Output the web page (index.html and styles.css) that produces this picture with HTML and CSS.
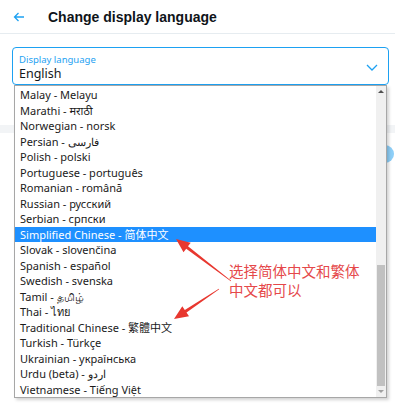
FILE: index.html
```html
<!DOCTYPE html>
<html lang="en">
<head>
  <meta charset="UTF-8" />
  <title>Change display language</title>
  <link rel="stylesheet" href="styles.css">
</head>
<body>
  <div class="column">
    <header>
      <svg class="back" width="12" height="10" viewBox="0 0 12 10">
        <path d="M11 5H1.5M5.5 1L1.5 5l4 4" fill="none" stroke="#1da1f2" stroke-width="1.3"/>
      </svg>
      <h1>Change display language</h1>
    </header>

    <div class="field">
      <div class="field-text">
        <span class="field-label">Display language</span>
        <span class="field-value">English</span>
      </div>
      <svg class="chevron" width="12" height="7" viewBox="0 0 12 7">
        <path d="M1 1l5 5 5-5" fill="none" stroke="#1da1f2" stroke-width="1.3"/>
      </svg>
    </div>

    <div class="band"></div>
    <div class="actions">
      <button class="save">Save</button>
    </div>
  </div>

  <div class="dropdown">
    <ul class="options">
      <li>Malay - Melayu</li>
      <li>Marathi - मराठी</li>
      <li>Norwegian - norsk</li>
      <li>Persian - فارسی</li>
      <li>Polish - polski</li>
      <li>Portuguese - português</li>
      <li>Romanian - română</li>
      <li>Russian - русский</li>
      <li>Serbian - српски</li>
      <li class="selected">Simplified Chinese - 简体中文</li>
      <li>Slovak - slovenčina</li>
      <li>Spanish - español</li>
      <li>Swedish - svenska</li>
      <li>Tamil - தமிழ்</li>
      <li>Thai - ไทย</li>
      <li>Traditional Chinese - 繁體中文</li>
      <li>Turkish - Türkçe</li>
      <li>Ukrainian - українська</li>
      <li>Urdu (beta) - اردو</li>
      <li>Vietnamese - Tiếng Việt</li>
    </ul>
    <div class="scrollbar">
      <span class="scroll-btn up"></span>
      <span class="scroll-space"></span>
      <span class="scroll-thumb"></span>
      <span class="scroll-btn down"></span>
    </div>
  </div>

  <svg class="marks" width="406" height="413" viewBox="0 0 406 413">
    <polygon fill="#e8372f" points="231.2,280.8 188,246.3 190.7,242.7 176,239 183.5,252.3 186.2,248.7 230.8,281.2"/>
    <polygon fill="#e8372f" points="219.2,289.3 186.5,312.5 189,316.2 174,319 182.3,306.2 184.8,310 218.8,288.7"/>
  </svg>
  <p class="note">选择简体中文和繁体<br>中文都可以</p>
</body>
</html>
```

FILE: styles.css
```css
body {
  margin: 0;
  font-family: "Noto Sans", "Noto Sans CJK SC", sans-serif;
  background: #fff;
  color: #14171a;
}

.column {
  width: 395px;
}

header {
  height: 33px;
  display: flex;
  align-items: center;
  border-bottom: 1px solid #e6ecf0;
}

.back {
  margin-left: 13px;
}

header h1 {
  margin: 0 0 0 23px;
  font-family: "Liberation Sans", Arial, sans-serif;
  font-size: 14px;
  font-weight: bold;
  color: #0f1419;
}

.field {
  margin: 13px 6px 0 12px;
  height: 38px;
  box-sizing: border-box;
  border: 1px solid #1da1f2;
  border-radius: 4px;
  display: flex;
  align-items: center;
  padding: 0 10px 0 6px;
}

.field-text {
  flex: 1;
  align-self: flex-start;
  padding-top: 6px;
  display: flex;
  flex-direction: column;
}

.field-label {
  font-size: 9.5px;
  line-height: 12px;
  color: #1da1f2;
}

.field-value {
  font-size: 12.5px;
  line-height: 16px;
}

.chevron {
  margin-top: 2px;
}

.band {
  margin-top: 40px;
  height: 8px;
  background: #f2f4f6;
}

.actions {
  display: flex;
  justify-content: flex-end;
  margin-top: 12px;
  padding-right: 1px;
}

.save {
  height: 18px;
  width: 60px;
  border: none;
  border-radius: 9px;
  background: #8ecff8;
  color: #fff;
  font-size: 10px;
}

.dropdown {
  position: absolute;
  left: 14px;
  top: 85px;
  width: 373px;
  height: 313px;
  box-sizing: border-box;
  border: 1px solid #a7a7a7;
  background: #fff;
  box-shadow: 2px 2px 3px rgba(0, 0, 0, 0.18);
  display: flex;
}

.options {
  flex: 1;
  list-style: none;
  margin: 0;
  padding: 1px 0 0;
}

.options li {
  height: 15.5px;
  line-height: 15.5px;
  padding-left: 5px;
  font-size: 11px;
  color: #1a1a1a;
  white-space: nowrap;
}

.options .selected {
  background: #1e90ff;
  color: #fff;
}

.scrollbar {
  width: 10px;
  background: #f0f0f0;
  display: flex;
  flex-direction: column;
}

.scroll-btn {
  height: 11px;
  display: flex;
  justify-content: center;
  align-items: center;
}

.scroll-btn::before {
  content: "";
  border-left: 3px solid transparent;
  border-right: 3px solid transparent;
}

.scroll-btn.up::before {
  border-bottom: 3px solid #505050;
}

.scroll-btn.down::before {
  border-top: 3px solid #a0a0a0;
}

.scroll-space {
  flex: 1;
}

.scroll-thumb {
  height: 121px;
  margin: 0 1px;
  background: #c1c1c1;
}

.marks {
  position: absolute;
  left: 0;
  top: 0;
  pointer-events: none;
}

.note {
  position: absolute;
  left: 229px;
  top: 261px;
  margin: 0;
  font-family: "Noto Sans CJK SC", sans-serif;
  font-size: 14.5px;
  line-height: 19px;
  color: #e5484a;
}
```
